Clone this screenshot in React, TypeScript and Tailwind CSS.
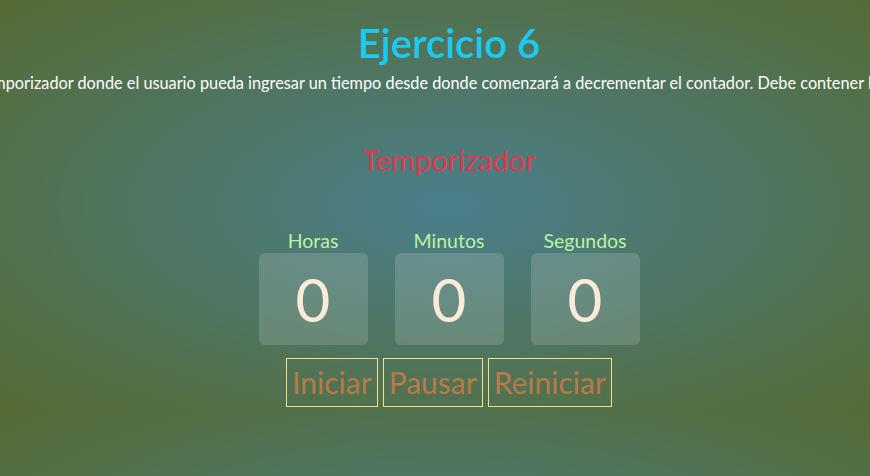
import React, { useState } from 'react';

const font = { fontFamily: 'Lato, "Open Sans", sans-serif' };

export default function App() {
  const [time] = useState({ h: 0, m: 0, s: 0 });

  const units = [
    { label: 'Horas', value: time.h },
    { label: 'Minutos', value: time.m },
    { label: 'Segundos', value: time.s },
  ];

  return (
    <div style={font} className="h-screen w-full overflow-hidden">
      <div className="flex h-full w-[898px] flex-col items-center bg-[radial-gradient(ellipse_at_center,#4a7f8c_0%,#556b33_100%)] bg-[length:100%_410px] bg-repeat">
        <h1 className="mt-[15px] flex h-[56px] items-center text-[40px] font-semibold text-[#1cc9f0]">
          Ejercicio 6
        </h1>
        <div className="flex h-[24px] w-full justify-center">
          <p className="whitespace-nowrap text-[16.3px] leading-[24px] text-white">
            Crear un temporizador donde el usuario pueda ingresar un tiempo desde donde comenzará a decrementar el contador. Debe contener los tres botones.
          </p>
        </div>

        <h2 className="mt-[45px] flex h-[40px] items-center text-[29px] text-[#e0394b]">Temporizador</h2>

        <div className="mt-[49px] flex gap-[27px]">
          {units.map((u) => (
            <div key={u.label} className="flex w-[109px] flex-col items-center">
              <span className="h-[24px] text-[19.5px] leading-[24px] text-[#b9f4a0]">{u.label}</span>
              <div className="flex h-[92px] w-full items-center justify-center rounded-md bg-white/15">
                <span className="text-[60px] leading-none text-[#fcebd9]">{u.value}</span>
              </div>
            </div>
          ))}
        </div>

        <div className="mt-[13px] flex gap-[5px]">
          {['Iniciar', 'Pausar', 'Reiniciar'].map((b) => (
            <button
              key={b}
              className="flex h-[49px] items-center border border-[#f3df8c] px-[5px] text-[30px] text-[#ba7a48]"
            >
              {b}
            </button>
          ))}
        </div>
      </div>
    </div>
  );
}
